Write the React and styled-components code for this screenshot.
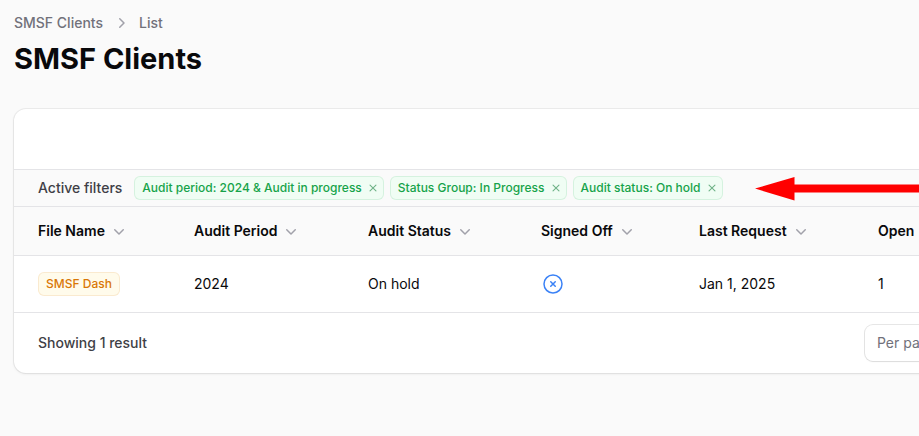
import React from "react"
import styled, { createGlobalStyle } from "styled-components"
import {
  HiMiniChevronDown,
  HiMiniChevronRight,
  HiMiniXMark,
  HiOutlineXCircle,
} from "react-icons/hi2"

const colors = {
  page: "#fafafa",
  line: "#e4e4e7",
  ring: "rgba(9, 9, 11, 0.06)",
  muted: "#71717a",
  faint: "#a1a1aa",
  text: "#09090b",
  body: "#3f3f46",
}

const GlobalStyle = createGlobalStyle`
  *, *::before, *::after {
    box-sizing: border-box;
  }

  body {
    margin: 0;
    background-color: ${colors.page};
    color: ${colors.text};
    font-family: Inter, "Liberation Sans", sans-serif;
    font-size: 14px;
    line-height: 20px;
    overflow-x: hidden;
  }

  button, select {
    font: inherit;
    color: inherit;
  }
`

const Page = styled.main`
  padding: 13px 0 60px 14px;
  overflow: hidden;
`

const Breadcrumbs = styled.ol`
  display: flex;
  align-items: center;
  gap: 8px;
  margin: 0 0 8px;
  padding: 0;
  list-style: none;
`

const Crumb = styled.li`
  display: flex;
  align-items: center;
  gap: 8px;
  font-weight: 500;
  color: ${colors.muted};

  a {
    color: inherit;
    text-decoration: none;
  }

  svg {
    width: 20px;
    height: 20px;
    color: ${colors.faint};
  }
`

const Heading = styled.h1`
  margin: 0 0 32px;
  font-size: 29px;
  line-height: 36px;
  font-weight: 700;
`

// The table panel is wider than the viewport and runs off its right edge
const Panel = styled.section`
  margin-right: -120px;
  background-color: #fff;
  border-radius: 12px;
  box-shadow: 0 0 0 1px ${colors.ring}, 0 1px 3px rgba(0, 0, 0, 0.08);
  overflow: hidden;
`

const Toolbar = styled.div`
  height: 60px;
`

const FilterBar = styled.div`
  position: relative;
  display: flex;
  align-items: center;
  gap: 12px;
  padding: 6px 24px;
  border-top: 1px solid ${colors.line};
  background-color: ${colors.page};
`

const FilterLabel = styled.span`
  font-weight: 500;
  color: ${colors.body};
`

const FilterList = styled.div`
  display: flex;
  gap: 6px;
`

const tones = {
  success: { text: "#16a34a", fill: "#f0fdf4", ring: "rgba(22, 163, 74, 0.12)" },
  warning: { text: "#d97706", fill: "#fffbeb", ring: "rgba(217, 119, 6, 0.12)" },
}

const Badge = styled.span`
  display: inline-flex;
  align-items: center;
  gap: 4px;
  height: 24px;
  padding: 0 8px;
  border-radius: 6px;
  box-shadow: inset 0 0 0 1px ${props => tones[props.$tone].ring};
  background-color: ${props => tones[props.$tone].fill};
  color: ${props => tones[props.$tone].text};
  font-size: 12px;
  line-height: 16px;
  font-weight: 500;
  white-space: nowrap;
`

const FilterBadge = styled(Badge)`
  padding-right: 4px;
`

const RemoveButton = styled.button`
  display: flex;
  padding: 0;
  border: 0 none;
  background: none;
  color: rgba(21, 128, 61, 0.6);
  cursor: pointer;

  svg {
    width: 14px;
    height: 14px;
  }
`

const Arrow = styled.svg`
  position: absolute;
  top: 7px;
  left: 741px;
  width: 600px;
  height: 24px;
  fill: #f00;
`

const Table = styled.table`
  width: 100%;
  table-layout: fixed;
  border-collapse: separate;
  border-spacing: 0;
  text-align: left;
`

const HeadCell = styled.th`
  width: ${props => (props.$width ? `${props.$width}px` : "auto")};
  height: 49px;
  padding: 0 12px;
  border-top: 1px solid ${colors.line};
  background-color: ${colors.page};

  &:first-child {
    padding-left: 24px;
  }
`

const SortButton = styled.button`
  display: flex;
  align-items: center;
  gap: 4px;
  padding: 0;
  border: 0 none;
  background: none;
  font-weight: 600;
  white-space: nowrap;
  cursor: pointer;

  svg {
    width: 20px;
    height: 20px;
    color: ${colors.faint};
  }
`

const Cell = styled.td`
  height: 57px;
  padding: 0 12px;
  border-top: 1px solid ${colors.line};

  &:first-child {
    padding-left: 24px;
  }
`

const SignedOffIcon = styled(HiOutlineXCircle)`
  display: block;
  width: 24px;
  height: 24px;
  color: #3b82f6;
`

const Footer = styled.footer`
  display: flex;
  align-items: center;
  justify-content: space-between;
  padding: 12px 24px;
  border-top: 1px solid ${colors.line};
`

const Overview = styled.span`
  font-weight: 500;
  color: ${colors.body};
`

const PerPage = styled.label`
  display: flex;
  align-items: center;
  width: 150px;
  height: 36px;
  padding: 0 12px;
  border-radius: 8px;
  box-shadow: 0 0 0 1px rgba(9, 9, 11, 0.1), 0 1px 2px rgba(0, 0, 0, 0.05);
  color: ${colors.muted};
  white-space: nowrap;

  select {
    flex: 1;
    margin-left: 8px;
    border: 0 none;
    background: none;
    color: ${colors.text};
  }
`

const filters = [
  "Audit period: 2024 & Audit in progress",
  "Status Group: In Progress",
  "Audit status: On hold",
]

const columns = [
  { label: "File Name", width: 168 },
  { label: "Audit Period", width: 174 },
  { label: "Audit Status", width: 173 },
  { label: "Signed Off", width: 158 },
  { label: "Last Request", width: 179 },
  { label: "Open" },
]

const clients = [
  {
    name: "SMSF Dash",
    period: "2024",
    status: "On hold",
    lastRequest: "Jan 1, 2025",
    open: 1,
  },
]

const ClientsPage = () => (
  <Page>
    <nav aria-label="Breadcrumb">
      <Breadcrumbs>
        <Crumb>
          <a href="#clients">SMSF Clients</a>
        </Crumb>
        <Crumb>
          <HiMiniChevronRight aria-hidden="true" />
          <a href="#list">List</a>
        </Crumb>
      </Breadcrumbs>
    </nav>
    <Heading>SMSF Clients</Heading>
    <Panel>
      <Toolbar />
      <FilterBar>
        <FilterLabel>Active filters</FilterLabel>
        <FilterList>
          {filters.map(filter => (
            <FilterBadge key={filter} $tone="success">
              {filter}
              <RemoveButton type="button" aria-label="Remove filter">
                <HiMiniXMark />
              </RemoveButton>
            </FilterBadge>
          ))}
        </FilterList>
        <Arrow viewBox="0 0 600 24" aria-hidden="true">
          <path d="M0 11.5 39.5 0v7.5H600v8H39.5v8z" />
        </Arrow>
      </FilterBar>
      <Table>
        <thead>
          <tr>
            {columns.map(column => (
              <HeadCell key={column.label} scope="col" $width={column.width}>
                <SortButton type="button">
                  {column.label}
                  <HiMiniChevronDown aria-hidden="true" />
                </SortButton>
              </HeadCell>
            ))}
          </tr>
        </thead>
        <tbody>
          {clients.map(client => (
            <tr key={client.name}>
              <Cell>
                <Badge $tone="warning">{client.name}</Badge>
              </Cell>
              <Cell>{client.period}</Cell>
              <Cell>{client.status}</Cell>
              <Cell>
                <SignedOffIcon aria-label="Not signed off" />
              </Cell>
              <Cell>{client.lastRequest}</Cell>
              <Cell>{client.open}</Cell>
            </tr>
          ))}
        </tbody>
      </Table>
      <Footer>
        <Overview>Showing 1 result</Overview>
        <PerPage>
          Per page
          <select defaultValue="10">
            <option>10</option>
            <option>25</option>
            <option>50</option>
          </select>
        </PerPage>
      </Footer>
    </Panel>
  </Page>
)

const App = () => (
  <>
    <GlobalStyle />
    <ClientsPage />
  </>
)

export default App
